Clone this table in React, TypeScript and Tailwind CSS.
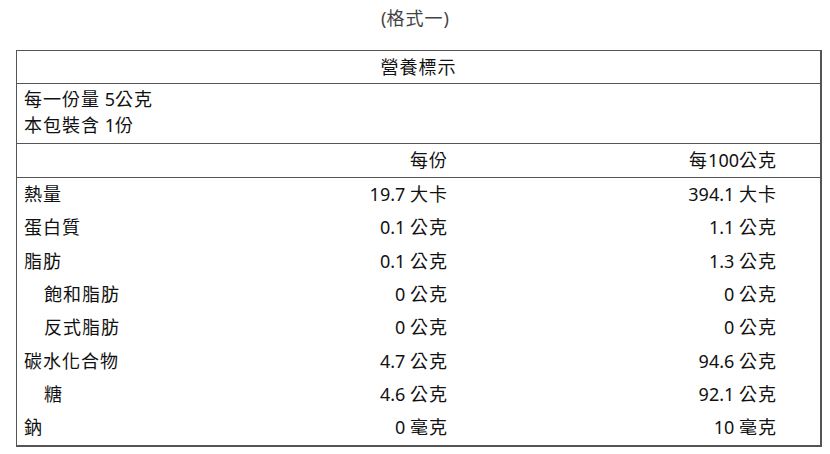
const rows = [
  { name: "熱量", per: "19.7 大卡", per100: "394.1 大卡" },
  { name: "蛋白質", per: "0.1 公克", per100: "1.1 公克" },
  { name: "脂肪", per: "0.1 公克", per100: "1.3 公克" },
  { name: "飽和脂肪", per: "0 公克", per100: "0 公克", sub: true },
  { name: "反式脂肪", per: "0 公克", per100: "0 公克", sub: true },
  { name: "碳水化合物", per: "4.7 公克", per100: "94.6 公克" },
  { name: "糖", per: "4.6 公克", per100: "92.1 公克", sub: true },
  { name: "鈉", per: "0 毫克", per100: "10 毫克" },
];

// CJK runs get a touch of extra spacing, like the original font
function T({ s }: { s: string }) {
  return (
    <>
      {s.split(/([\u3000-\u9fff\uff00-\uffef]+)/).map((p, i) =>
        /[\u3000-\u9fff\uff00-\uffef]/.test(p) ? (
          <span key={i} className="tracking-[1px]">
            {p}
          </span>
        ) : (
          <span key={i}>{p}</span>
        )
      )}
    </>
  );
}

export default function App() {
  return (
    <div
      className="w-[830px] h-[454px] bg-white text-[18px] text-[#111]"
      style={{ fontFamily: '"Noto Sans", "Noto Sans CJK TC", sans-serif' }}
    >
      <div className="h-[50px] pt-[5px] text-center leading-[26px] text-[#444]">
        <T s="(格式一)" />
      </div>
      <div className="ml-[16px] w-[806px] border border-[#555] border-r-2 border-b-2">
        {/* title */}
        <div className="h-[33px] border-b border-[#555] text-center leading-[33px]">
          <T s="營養標示" />
        </div>

        {/* serving info */}
        <div className="h-[60px] border-b border-[#555] pl-[7px] pt-[2px] leading-[26px]">
          <div>
            <T s="每一份量 5公克" />
          </div>
          <div>
            <T s="本包裝含 1份" />
          </div>
        </div>

        {/* column header */}
        <div className="grid h-[34px] grid-cols-[1fr_120px_329px] items-center border-b border-[#555] pl-[7px] pr-[43px]">
          <div></div>
          <div className="text-right">
            <T s="每份" />
          </div>
          <div className="text-right">
            <T s="每100公克" />
          </div>
        </div>

        {/* nutrients */}
        <div className="pb-[1px]">
          {rows.map((r) => (
            <div
              key={r.name}
              className="grid h-[33.3px] grid-cols-[1fr_120px_329px] items-center pl-[7px] pr-[43px]"
            >
              <div className={r.sub ? "pl-[20px]" : ""}>
                <T s={r.name} />
              </div>
              <div className="text-right whitespace-nowrap">
                <T s={r.per} />
              </div>
              <div className="text-right whitespace-nowrap">
                <T s={r.per100} />
              </div>
            </div>
          ))}
        </div>
      </div>
    </div>
  );
}
